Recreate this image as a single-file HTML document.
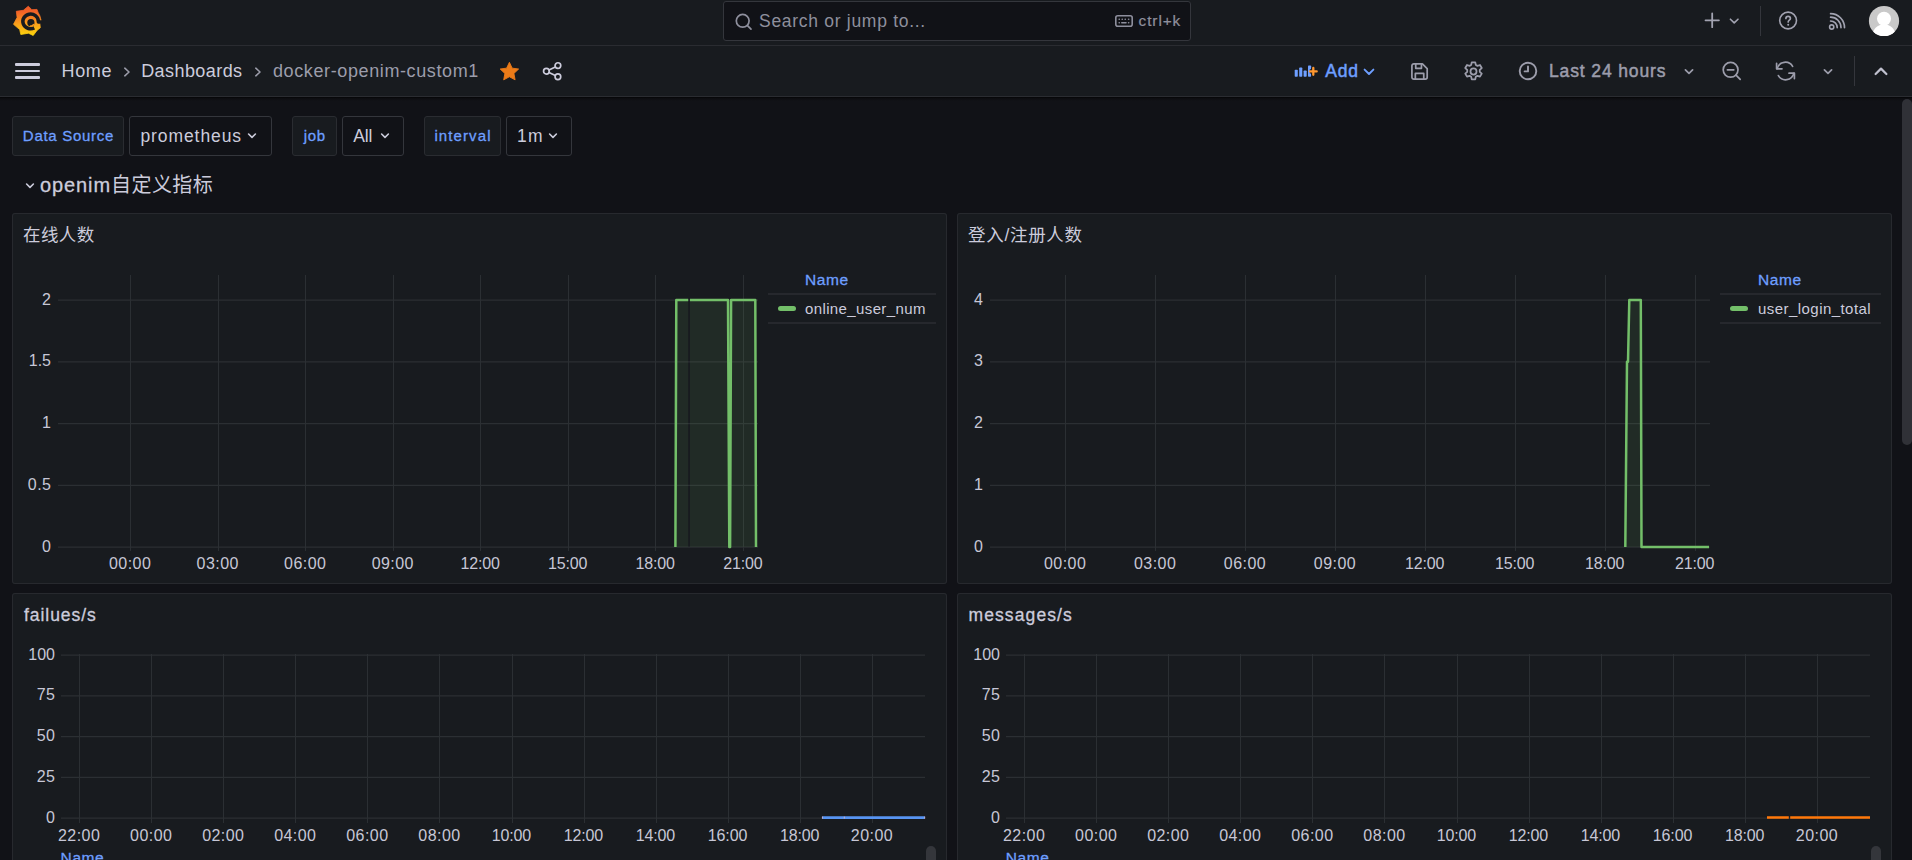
<!DOCTYPE html>
<html lang="en">
<head>
<meta charset="utf-8">
<title>docker-openim-custom1 - Dashboards - Grafana</title>
<style>
*{box-sizing:border-box;margin:0;padding:0}
html,body{width:1912px;height:860px;overflow:hidden;background:#111217;color:#ccccdc;
  font-family:"Liberation Sans","Noto Sans CJK SC",sans-serif;font-size:17.5px;}
.abs{position:absolute}
#top1{position:absolute;left:0;top:0;width:1912px;height:46px;background:#181b1f;border-bottom:1px solid #2a2c31}
#top2{position:absolute;left:0;top:46px;width:1912px;height:51px;background:#181b1f;border-bottom:1px solid #2a2c31}
.t{position:absolute;white-space:nowrap;line-height:1}
.ico{position:absolute;overflow:visible}
.ico *{fill:none;stroke:currentColor;stroke-linecap:round;stroke-linejoin:round}
#search{position:absolute;left:723px;top:1px;width:468px;height:40px;background:#111217;border:1px solid #34363c;border-radius:3px}
.var-l{position:absolute;top:116px;height:40px;background:#181b1f;border:1px solid #2a2c31;border-radius:3px;color:#6e9fff;font-size:15px;font-weight:400;-webkit-text-stroke:0.3px #6e9fff;line-height:38px;text-align:center}
.var-v{position:absolute;top:116px;height:40px;background:#111217;border:1px solid #34363c;border-radius:3px;color:#ccccdc;font-size:17.5px;line-height:38px;padding-left:10px}
.panel{position:absolute;background:#181b1f;box-shadow:inset 0 0 0 1px #27292e;border-radius:3px;overflow:hidden}
.ptitle{position:absolute;left:11px;top:10px;font-size:17.5px;font-weight:400;line-height:24px;color:#ccccdc;white-space:nowrap}
.yl{position:absolute;font-size:16px;line-height:16px;color:#c7c7d6;text-align:right;white-space:nowrap}
.xl{position:absolute;font-size:16px;line-height:16px;color:#c7c7d6;text-align:center;width:80px;margin-left:-40px;white-space:nowrap}
.lg{position:absolute;font-size:15px;line-height:16px;white-space:nowrap}
svg.plot{position:absolute;left:0;top:0}
</style>
</head>
<body>
<!-- ===== top bar level 1 ===== -->
<div id="top1">
  <!-- grafana logo -->
  <svg class="abs" style="left:0;top:0" width="50" height="44" viewBox="0 0 50 44">
    <defs><linearGradient id="gl" gradientUnits="userSpaceOnUse" x1="0" y1="36" x2="0" y2="6"><stop offset="0" stop-color="#fcd80b"/><stop offset="0.4" stop-color="#f9a01b"/><stop offset="0.8" stop-color="#f26327"/><stop offset="1" stop-color="#f05a28"/></linearGradient></defs>
    <path fill="url(#gl)" stroke="url(#gl)" stroke-width="0.8" stroke-linejoin="round" d="M28.3 6.2 L31.8 9.7 L37 9.4 L38 12.2 Q40.2 15.4 41.1 20.4 L39.9 24 L40.3 27.8 L37.2 30.2 L33.2 35.5 L28.5 33.2 L20.8 34.5 L19.7 29.6 L13.5 24.3 L17.1 17.4 L16.3 11.3 L23.4 10.3 Z"/>
    <path fill="none" stroke="#181b1f" stroke-width="3.5" stroke-linecap="butt" stroke-linejoin="round" d="M43 22.0 L38.35 22.04 L38.35 21.14 A7.75 7.35 0 1 0 34.24 27.89"/>
    <circle cx="30.9" cy="22.7" r="3.6" fill="#181b1f"/>
    <path fill="none" stroke="#f9961d" stroke-width="1.5" stroke-linecap="round" d="M33.4 24.6 Q32.4 26.4 30.6 26"/>
  </svg>
  <div id="search">
    <svg class="ico" style="left:10px;top:10px;color:#8e8f9d" width="20" height="20" viewBox="0 0 20 20"><circle cx="8.7" cy="8.8" r="6.4" stroke-width="1.7"/><path d="M13.5 13.6 L17 17.1" stroke-width="1.7"/></svg>
    <span class="t" style="left:35px;top:11px;font-size:17.5px;color:#8e8f9d;letter-spacing:0.71px">Search or jump to...</span>
    <svg class="ico" style="left:390px;top:12px;color:#8e8f9d" width="20" height="16" viewBox="1114 14 20 16"><rect x="1115.8" y="15.8" width="16.4" height="10.4" rx="2" stroke-width="1.6"/><path d="M1119.2 19.3h.1M1122.2 19.3h.1M1125.2 19.3h.1M1128.6 19.3h.1M1119.2 22.7h.1M1128.6 22.7h.1M1121.8 22.7h4.2" stroke-width="1.6"/></svg>
    <span class="t" style="left:414.6px;top:11px;font-size:15.4px;color:#8e8f9d;letter-spacing:0.9px;-webkit-text-stroke:0.2px #8e8f9d">ctrl+k</span>
  </div>
  <!-- plus -->
  <svg class="ico" style="left:1700px;top:8px;color:#a2a3b1" width="24" height="24" viewBox="1700 8 24 24"><path d="M1712.2 13.4V27.2M1705.5 20.3H1718.9" stroke-width="1.8"/></svg>
  <svg class="ico" style="left:1726px;top:14px;color:#a2a3b1" width="16" height="14" viewBox="1726 14 16 14"><path d="M1730.4 19.2 L1734.2 22.9 L1738 19.2" stroke-width="1.6"/></svg>
  <div class="abs" style="left:1760px;top:6px;width:1px;height:30px;background:#34363c"></div>
  <!-- help -->
  <svg class="ico" style="left:1776px;top:8px;color:#a2a3b1" width="24" height="24" viewBox="1776 8 24 24"><circle cx="1788.1" cy="20.5" r="8.4" stroke-width="1.6"/><path d="M1785.9 18.4 C1785.9 15.6 1790.4 15.6 1790.4 18.4 C1790.4 20.2 1788.2 20.1 1788.2 22" stroke-width="1.7"/><path d="M1788.2 24.7v.1" stroke-width="2"/></svg>
  <!-- rss -->
  <svg class="ico" style="left:1824px;top:8px;color:#a2a3b1" width="26" height="26" viewBox="1824 8 26 26"><circle cx="1831.7" cy="27" r="2.1" stroke-width="1.6"/><path d="M1830.6 21 A6.6 6.6 0 0 1 1837.2 27.6" stroke-width="1.7"/><path d="M1830.6 17.2 A10.4 10.4 0 0 1 1841 27.6" stroke-width="1.7"/><path d="M1830.6 13.7 A13.9 13.9 0 0 1 1844.5 27.6" stroke-width="1.7"/></svg>
  <!-- avatar -->
  <svg class="abs" style="left:1868px;top:5px" width="32" height="32" viewBox="1868 5 32 32"><defs><clipPath id="av"><circle cx="1884" cy="21" r="15.1"/></clipPath></defs><circle cx="1884" cy="21" r="15.1" fill="#c9c9c9"/><g clip-path="url(#av)" fill="#ffffff"><circle cx="1884" cy="18.8" r="7"/><path d="M1872.5 37 C1872.5 29 1877 24.6 1884 24.6 C1891 24.6 1895.5 29 1895.5 37 Z"/></g></svg>
</div>
<!-- ===== top bar level 2 ===== -->
<div id="top2">
  <!-- hamburger : coords relative to top2 (page y - 46) -->
  <div class="abs" style="left:14.5px;top:17px;width:25px;height:2.5px;background:#ccccdc;border-radius:1px"></div>
  <div class="abs" style="left:14.5px;top:23.5px;width:25px;height:2.5px;background:#ccccdc;border-radius:1px"></div>
  <div class="abs" style="left:14.5px;top:30px;width:25px;height:2.5px;background:#ccccdc;border-radius:1px"></div>
  <span class="t" id="bc1" style="left:61.6px;top:16px;font-size:18px;color:#ccccdc;letter-spacing:0.6px">Home</span>
  <svg class="ico" style="left:122px;top:20px;color:#9a9ba8" width="10" height="12" viewBox="0 0 10 12"><path d="M2.8 2.2 L7 6 L2.8 9.8" stroke-width="1.6"/></svg>
  <span class="t" id="bc2" style="left:141.2px;top:16px;font-size:18px;color:#ccccdc;letter-spacing:0.43px">Dashboards</span>
  <svg class="ico" style="left:252.8px;top:20px;color:#9a9ba8" width="10" height="12" viewBox="0 0 10 12"><path d="M2.8 2.2 L7 6 L2.8 9.8" stroke-width="1.6"/></svg>
  <span class="t" id="bc3" style="left:273px;top:16px;font-size:18px;color:#9c9dab;letter-spacing:0.61px">docker-openim-custom1</span>
  <!-- star -->
  <svg class="abs" style="left:496px;top:12px" width="28" height="28" viewBox="496 58 28 28"><path fill="#eb7b18" stroke="#eb7b18" stroke-width="0.9" stroke-linejoin="round" d="M509.40 62.30 L512.19 68.16 L518.63 69.00 L513.92 73.47 L515.10 79.85 L509.40 76.75 L503.70 79.85 L504.88 73.47 L500.17 69.00 L506.61 68.16 Z"/></svg>
  <!-- share -->
  <svg class="ico" style="left:541px;top:14px;color:#ccccdc" width="22" height="22" viewBox="0 0 22 22"><circle cx="5.4" cy="11.2" r="2.85" stroke-width="1.7"/><circle cx="16.9" cy="5.6" r="2.85" stroke-width="1.7"/><circle cx="16.9" cy="16.8" r="2.85" stroke-width="1.7"/><path d="M8 9.9 L14.3 6.9 M8 12.5 L14.3 15.5" stroke-width="1.7"/></svg>

  <!-- Add -->
  <svg class="abs" style="left:1294px;top:17px" width="24" height="16" viewBox="1294 63 24 16"><g fill="#6e9fff"><rect x="1294.7" y="69.8" width="3.1" height="7" rx="0.7"/><rect x="1299.2" y="67.6" width="3.1" height="9.2" rx="0.7"/><rect x="1303.6" y="70.5" width="3.1" height="6.3" rx="0.7"/><rect x="1308" y="65.5" width="3.1" height="11.3" rx="0.7"/></g><path d="M1313.3 67.9v7M1309.8 71.4h7" stroke="#181b1f" stroke-width="4.2" stroke-linecap="butt" fill="none"/><path d="M1313.3 68v6.8M1309.9 71.4h6.8" stroke="#ff9830" stroke-width="2.3" stroke-linecap="round" fill="none"/></svg>
  <span class="t" id="add" style="left:1325.3px;top:17px;font-size:17.5px;font-weight:400;-webkit-text-stroke:0.5px #6e9fff;letter-spacing:0.75px;color:#6e9fff">Add</span>
  <svg class="ico" style="left:1362px;top:21px;color:#6e9fff" width="14" height="10" viewBox="0 0 14 10"><path d="M2.6 2.6 L7 7 L11.4 2.6" stroke-width="1.9"/></svg>
  <!-- save -->
  <svg class="ico" style="left:1409.8px;top:15.85px;color:#9c9dab" width="19.1" height="19.1" viewBox="0 0 20 20"><path d="M2 4 a2 2 0 0 1 2-2 H13 L18 7 V16 a2 2 0 0 1-2 2 H4 a2 2 0 0 1-2-2 Z" stroke-width="1.8"/><path d="M6 2.4 V6.6 H12 V2.4" stroke-width="1.8"/><path d="M5.6 17.6 V12 H14.4 V17.6" stroke-width="1.8"/></svg>
  <!-- gear -->
  <svg class="ico" style="left:1461.8px;top:14px;color:#9c9dab" width="23" height="23" viewBox="0 0 22 22"><circle cx="11" cy="11" r="2.9" stroke-width="1.7"/><path stroke-width="1.7" d="M9.3 2.2 h3.4 l.5 2.5 l1.6 .9 l2.4-.8 l1.7 2.9 l-1.9 1.7 v1.9 l1.9 1.7 l-1.7 2.9 l-2.4-.8 l-1.6 .9 l-.5 2.5 h-3.4 l-.5-2.5 l-1.6-.9 l-2.4 .8 l-1.7-2.9 l1.9-1.7 v-1.9 l-1.9-1.7 l1.7-2.9 l2.4 .8 l1.6-.9 Z"/></svg>
  <!-- clock -->
  <svg class="ico" style="left:1518.2px;top:15.4px;color:#9c9dab" width="20" height="20" viewBox="0 0 20 20"><circle cx="10" cy="10" r="8.3" stroke-width="1.9"/><path d="M10 5.4 V10.4 H6.6" stroke-width="1.9"/></svg>
  <span class="t" id="l24" style="left:1549px;top:17px;font-size:17.5px;font-weight:400;-webkit-text-stroke:0.5px #9c9dab;letter-spacing:0.87px;color:#9c9dab">Last 24 hours</span>
  <svg class="ico" style="left:1683px;top:21px;color:#9c9dab" width="12" height="10" viewBox="0 0 12 10"><path d="M2.4 2.8 L6 6.4 L9.6 2.8" stroke-width="1.7"/></svg>
  <!-- zoom out -->
  <svg class="ico" style="left:1721px;top:14px;color:#9c9dab" width="22" height="22" viewBox="0 0 22 22"><circle cx="9.6" cy="9.8" r="7.4" stroke-width="1.7"/><path d="M15 15.2 L19.2 19.4 M6.4 9.8 H12.8" stroke-width="1.7"/></svg>
  <!-- refresh -->
  <svg class="ico" style="left:1775px;top:14px;color:#9c9dab" width="21" height="22" viewBox="0 0 21 22"><path d="M2.2 8.6 A8.4 8.4 0 0 1 17.6 6.4 M18.8 13.4 A8.4 8.4 0 0 1 3.4 15.6" stroke-width="1.7"/><path d="M1.6 3.4 V8.8 H7 M19.4 18.6 V13.2 H14" stroke-width="1.7"/></svg>
  <svg class="ico" style="left:1822px;top:21px;color:#9c9dab" width="12" height="10" viewBox="0 0 12 10"><path d="M2.4 2.8 L6 6.4 L9.6 2.8" stroke-width="1.7"/></svg>
  <div class="abs" style="left:1854px;top:10px;width:1px;height:30px;background:#34363c"></div>
  <svg class="ico" style="left:1873px;top:19px;color:#c0c1cf" width="16" height="12" viewBox="0 0 16 12"><path d="M2.6 9 L8 3.6 L13.4 9" stroke-width="2.2"/></svg>
</div>
<!-- ===== variables ===== -->
<div id="vars">
  <div class="var-l" style="left:12px;width:112px;letter-spacing:0.7px;padding-left:0.8px">Data Source</div>
  <div class="var-v" style="left:129px;width:143px;letter-spacing:0.92px;padding-left:10.4px">prometheus<svg class="ico" style="left:116px;top:14px;color:#ccccdc" width="12" height="10" viewBox="0 0 12 10"><path d="M2.6 3 L6 6.4 L9.4 3" stroke-width="1.6"/></svg></div>
  <div class="var-l" style="left:292px;width:45px;letter-spacing:0.67px;padding-left:0.4px">job</div>
  <div class="var-v" style="left:342px;width:62px;letter-spacing:-0.15px;padding-left:10.2px">All<svg class="ico" style="left:36px;top:14px;color:#ccccdc" width="12" height="10" viewBox="0 0 12 10"><path d="M2.6 3 L6 6.4 L9.4 3" stroke-width="1.6"/></svg></div>
  <div class="var-l" style="left:424px;width:77px;letter-spacing:1.1px;padding-left:1px">interval</div>
  <div class="var-v" style="left:506px;width:66px;letter-spacing:1.3px">1m<svg class="ico" style="left:40px;top:14px;color:#ccccdc" width="12" height="10" viewBox="0 0 12 10"><path d="M2.6 3 L6 6.4 L9.4 3" stroke-width="1.6"/></svg></div>
</div>
<!-- ===== row ===== -->
<div id="row">
  <svg class="ico" style="left:24px;top:181px;color:#ccccdc" width="12" height="10" viewBox="0 0 12 10"><path d="M2.6 3 L6 6.4 L9.4 3" stroke-width="1.6"/></svg>
  <span class="t" id="rowt" style="left:40px;top:173px;font-size:20px;line-height:24px;font-weight:400;color:#ccccdc"><span style="letter-spacing:0.9px;-webkit-text-stroke:0.3px #ccccdc">openim</span><span style="letter-spacing:0.45px">自定义指标</span></span>
</div>
<!-- ===== panels ===== -->
<div id="p1" class="panel" style="left:12px;top:213px;width:935px;height:371px">
  <div class="ptitle" style="letter-spacing:0.4px">在线人数</div>
  <svg class="plot" width="935" height="370" viewBox="12 213 935 370">
    <path d="M58 300.0H758M58 361.75H758M58 423.5H758M58 485.25H758M58 547.0H758" stroke="#2b2f33" stroke-width="1.25" fill="none"/>
    <path d="M130.5 275V551M218.1 275V551M305.6 275V551M393.2 275V551M480.8 275V551M568.3 275V551M655.9 275V551M743.5 275V551" stroke="#2b2f33" stroke-width="1" fill="none" shape-rendering="crispEdges"/>
    <path d="M675.4 547L676.3 300H688.2V547ZM690 547V300H728L729.3 547ZM730.1 547L731.1 300H755.3L756 547Z" fill="#73bf69" fill-opacity="0.1" stroke="none"/><path d="M675.4 547L676.3 300H688.2M690 300H728L729.3 547H730.1L731.1 300H755.3L756 547" fill="none" stroke="#73bf69" stroke-width="2.5" stroke-linejoin="round"/>
  </svg>
  <div class="yl" style="left:-20.55px;width:60px;top:78.5px;letter-spacing:0.45px">2</div>
  <div class="yl" style="left:-21.0px;width:60px;top:140.25px;letter-spacing:0.0px">1.5</div>
  <div class="yl" style="left:-21.0px;width:60px;top:202.0px;letter-spacing:0.0px">1</div>
  <div class="yl" style="left:-20.55px;width:60px;top:263.75px;letter-spacing:0.45px">0.5</div>
  <div class="yl" style="left:-20.55px;width:60px;top:325.5px;letter-spacing:0.45px">0</div>
  <div class="xl" style="left:118.125px;top:343px;letter-spacing:0.45px">00:00</div>
  <div class="xl" style="left:205.725px;top:343px;letter-spacing:0.45px">03:00</div>
  <div class="xl" style="left:293.225px;top:343px;letter-spacing:0.45px">06:00</div>
  <div class="xl" style="left:380.825px;top:343px;letter-spacing:0.45px">09:00</div>
  <div class="xl" style="left:468.125px;top:343px;letter-spacing:-0.15px">12:00</div>
  <div class="xl" style="left:555.6249999999999px;top:343px;letter-spacing:-0.15px">15:00</div>
  <div class="xl" style="left:643.2249999999999px;top:343px;letter-spacing:-0.15px">18:00</div>
  <div class="xl" style="left:730.8249999999999px;top:343px;letter-spacing:-0.15px">21:00</div>
  <div class="lg" style="left:793px;top:59px;color:#6e9fff;font-size:15.5px;-webkit-text-stroke:0.3px #6e9fff;letter-spacing:0.6px">Name</div>
  <div class="abs" style="left:756px;top:80px;width:168px;height:2px;background:#26282d"></div>
  <div class="abs" style="left:766px;top:92.5px;width:17.5px;height:5px;border-radius:2.5px;background:#73bf69"></div>
  <div class="lg" style="left:793px;top:88px;color:#ccccdc;letter-spacing:0.38px">online_user_num</div>
  <div class="abs" style="left:756px;top:109px;width:168px;height:2px;background:#26282d"></div>

</div>
<div id="p2" class="panel" style="left:957px;top:213px;width:935px;height:371px">
  <div class="ptitle" style="letter-spacing:0.7px">登入/注册人数</div>
  <svg class="plot" width="935" height="370" viewBox="957 213 935 370">
    <path d="M990 300.0H1710M990 361.75H1710M990 423.5H1710M990 485.25H1710M990 547.0H1710" stroke="#2b2f33" stroke-width="1.25" fill="none"/>
    <path d="M1065.5 275V551M1155.5 275V551M1245.4 275V551M1335.4 275V551M1425.4 275V551M1515.3 275V551M1605.3 275V551M1695.3 275V551" stroke="#2b2f33" stroke-width="1" fill="none" shape-rendering="crispEdges"/>
    <path d="M1625.3 547L1627 361.75H1628L1629.3 300H1640.8L1641.5 547Z" fill="#73bf69" fill-opacity="0.1" stroke="none"/><path d="M1625.3 547L1627 361.75H1628L1629.3 300H1640.8L1641.5 547H1709" fill="none" stroke="#73bf69" stroke-width="2.5" stroke-linejoin="round"/>
  </svg>
  <div class="yl" style="left:-33.55px;width:60px;top:78.5px;letter-spacing:0.45px">4</div>
  <div class="yl" style="left:-33.55px;width:60px;top:140.25px;letter-spacing:0.45px">3</div>
  <div class="yl" style="left:-33.55px;width:60px;top:202.0px;letter-spacing:0.45px">2</div>
  <div class="yl" style="left:-34.0px;width:60px;top:263.75px;letter-spacing:0.0px">1</div>
  <div class="yl" style="left:-33.55px;width:60px;top:325.5px;letter-spacing:0.45px">0</div>
  <div class="xl" style="left:108.125px;top:343px;letter-spacing:0.45px">00:00</div>
  <div class="xl" style="left:198.125px;top:343px;letter-spacing:0.45px">03:00</div>
  <div class="xl" style="left:288.0250000000001px;top:343px;letter-spacing:0.45px">06:00</div>
  <div class="xl" style="left:378.0250000000001px;top:343px;letter-spacing:0.45px">09:00</div>
  <div class="xl" style="left:467.7250000000001px;top:343px;letter-spacing:-0.15px">12:00</div>
  <div class="xl" style="left:557.6249999999999px;top:343px;letter-spacing:-0.15px">15:00</div>
  <div class="xl" style="left:647.6249999999999px;top:343px;letter-spacing:-0.15px">18:00</div>
  <div class="xl" style="left:737.6249999999999px;top:343px;letter-spacing:-0.15px">21:00</div>
  <div class="lg" style="left:801px;top:59px;color:#6e9fff;font-size:15.5px;-webkit-text-stroke:0.3px #6e9fff;letter-spacing:0.6px">Name</div>
  <div class="abs" style="left:763px;top:80px;width:161px;height:2px;background:#26282d"></div>
  <div class="abs" style="left:773px;top:92.5px;width:17.5px;height:5px;border-radius:2.5px;background:#73bf69"></div>
  <div class="lg" style="left:801px;top:88px;color:#ccccdc;letter-spacing:0.45px">user_login_total</div>
  <div class="abs" style="left:763px;top:109px;width:161px;height:2px;background:#26282d"></div>

</div>
<div id="p3" class="panel" style="left:12px;top:593px;width:935px;height:370px">
  <div class="ptitle" style="letter-spacing:0.95px"><span style="-webkit-text-stroke:0.3px #ccccdc;margin-left:1px">failues/s</span></div>
  <svg class="plot" width="935" height="370" viewBox="12 593 935 370">
    <path d="M61 655.0H925M61 695.75H925M61 736.5H925M61 777.25H925M61 818.0H925" stroke="#2b2f33" stroke-width="1.25" fill="none"/>
    <path d="M79.5 654V822.5M151.6 654V822.5M223.7 654V822.5M295.7 654V822.5M367.8 654V822.5M439.9 654V822.5M512.0 654V822.5M584.1 654V822.5M656.1 654V822.5M728.2 654V822.5M800.3 654V822.5M872.4 654V822.5" stroke="#2b2f33" stroke-width="1" fill="none" shape-rendering="crispEdges"/>
    <path d="M822.1 817.6H924.9" fill="none" stroke="#5794f2" stroke-width="2.6"/><path d="M822.4 816.6v2M844.3 816.6v2M924.7 816.6v2" stroke="#d9b3c4" stroke-width="0.9" fill="none"/>
  </svg>
  <div class="yl" style="left:-17.0px;width:60px;top:53.5px;letter-spacing:0.0px">100</div>
  <div class="yl" style="left:-16.55px;width:60px;top:94.25px;letter-spacing:0.45px">75</div>
  <div class="yl" style="left:-16.55px;width:60px;top:135.0px;letter-spacing:0.45px">50</div>
  <div class="yl" style="left:-16.55px;width:60px;top:175.75px;letter-spacing:0.45px">25</div>
  <div class="yl" style="left:-16.55px;width:60px;top:216.5px;letter-spacing:0.45px">0</div>
  <div class="xl" style="left:67.125px;top:234.5px;letter-spacing:0.45px">22:00</div>
  <div class="xl" style="left:139.225px;top:234.5px;letter-spacing:0.45px">00:00</div>
  <div class="xl" style="left:211.325px;top:234.5px;letter-spacing:0.45px">02:00</div>
  <div class="xl" style="left:283.325px;top:234.5px;letter-spacing:0.45px">04:00</div>
  <div class="xl" style="left:355.425px;top:234.5px;letter-spacing:0.45px">06:00</div>
  <div class="xl" style="left:427.525px;top:234.5px;letter-spacing:0.45px">08:00</div>
  <div class="xl" style="left:499.325px;top:234.5px;letter-spacing:-0.15px">10:00</div>
  <div class="xl" style="left:571.425px;top:234.5px;letter-spacing:-0.15px">12:00</div>
  <div class="xl" style="left:643.425px;top:234.5px;letter-spacing:-0.15px">14:00</div>
  <div class="xl" style="left:715.525px;top:234.5px;letter-spacing:-0.15px">16:00</div>
  <div class="xl" style="left:787.6249999999999px;top:234.5px;letter-spacing:-0.15px">18:00</div>
  <div class="xl" style="left:860.025px;top:234.5px;letter-spacing:0.45px">20:00</div>
  <div class="lg" style="left:48.6px;top:257px;color:#6e9fff;font-size:15.5px;-webkit-text-stroke:0.3px #6e9fff;letter-spacing:0.6px">Name</div>
  <div class="abs" style="left:914px;top:253px;width:10px;height:40px;background:#34363b;border-radius:5px"></div>

</div>
<div id="p4" class="panel" style="left:957px;top:593px;width:935px;height:370px">
  <div class="ptitle" style="letter-spacing:1.1px"><span style="-webkit-text-stroke:0.3px #ccccdc;margin-left:0.5px">messages/s</span></div>
  <svg class="plot" width="935" height="370" viewBox="957 593 935 370">
    <path d="M1006 655.0H1870M1006 695.75H1870M1006 736.5H1870M1006 777.25H1870M1006 818.0H1870" stroke="#2b2f33" stroke-width="1.25" fill="none"/>
    <path d="M1024.5 654V822.5M1096.6 654V822.5M1168.7 654V822.5M1240.7 654V822.5M1312.8 654V822.5M1384.9 654V822.5M1457.0 654V822.5M1529.1 654V822.5M1601.1 654V822.5M1673.2 654V822.5M1745.3 654V822.5M1817.4 654V822.5" stroke="#2b2f33" stroke-width="1" fill="none" shape-rendering="crispEdges"/>
    <path d="M1767 817.6H1788.8M1790.2 817.6H1870" fill="none" stroke="#ff780a" stroke-width="2.5"/>
  </svg>
  <div class="yl" style="left:-17.0px;width:60px;top:53.5px;letter-spacing:0.0px">100</div>
  <div class="yl" style="left:-16.55px;width:60px;top:94.25px;letter-spacing:0.45px">75</div>
  <div class="yl" style="left:-16.55px;width:60px;top:135.0px;letter-spacing:0.45px">50</div>
  <div class="yl" style="left:-16.55px;width:60px;top:175.75px;letter-spacing:0.45px">25</div>
  <div class="yl" style="left:-16.55px;width:60px;top:216.5px;letter-spacing:0.45px">0</div>
  <div class="xl" style="left:67.125px;top:234.5px;letter-spacing:0.45px">22:00</div>
  <div class="xl" style="left:139.2249999999999px;top:234.5px;letter-spacing:0.45px">00:00</div>
  <div class="xl" style="left:211.32500000000005px;top:234.5px;letter-spacing:0.45px">02:00</div>
  <div class="xl" style="left:283.32500000000005px;top:234.5px;letter-spacing:0.45px">04:00</div>
  <div class="xl" style="left:355.42499999999995px;top:234.5px;letter-spacing:0.45px">06:00</div>
  <div class="xl" style="left:427.5250000000001px;top:234.5px;letter-spacing:0.45px">08:00</div>
  <div class="xl" style="left:499.325px;top:234.5px;letter-spacing:-0.15px">10:00</div>
  <div class="xl" style="left:571.4249999999998px;top:234.5px;letter-spacing:-0.15px">12:00</div>
  <div class="xl" style="left:643.4249999999998px;top:234.5px;letter-spacing:-0.15px">14:00</div>
  <div class="xl" style="left:715.525px;top:234.5px;letter-spacing:-0.15px">16:00</div>
  <div class="xl" style="left:787.6249999999999px;top:234.5px;letter-spacing:-0.15px">18:00</div>
  <div class="xl" style="left:860.0250000000001px;top:234.5px;letter-spacing:0.45px">20:00</div>
  <div class="lg" style="left:48.799999999999955px;top:257px;color:#6e9fff;font-size:15.5px;-webkit-text-stroke:0.3px #6e9fff;letter-spacing:0.6px">Name</div>
  <div class="abs" style="left:914px;top:253px;width:10px;height:40px;background:#34363b;border-radius:5px"></div>

</div>
<!-- ===== page scrollbar ===== -->
<div class="abs" style="left:0;top:97px;width:1912px;height:4px;background:linear-gradient(#050507,rgba(8,8,10,0.45) 40%,rgba(17,18,23,0))"></div>
<div class="abs" style="left:1902px;top:98.5px;width:10px;height:346px;background:#303137;border-radius:5px"></div>
</body>
</html>
